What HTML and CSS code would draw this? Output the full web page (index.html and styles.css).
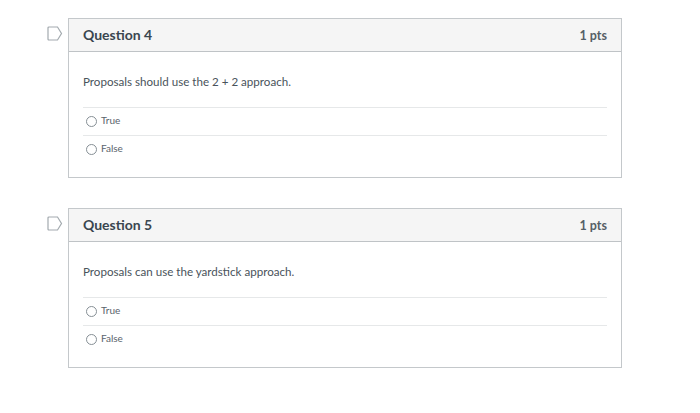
FILE: index.html
```html
<!DOCTYPE html>
<html lang="en">
<head>
    <meta charset="UTF-8">
    <title>Quiz</title>
    <link rel="stylesheet" href="styles.css">
</head>
<body>
    <div class="quiz">
        <div class="question-row">
            <svg class="flag" width="16" height="15" viewBox="0 0 16 15">
                <path d="M2 1H10.5L14.5 7.5L10.5 14H2Q1 14 1 13V2Q1 1 2 1Z" fill="none" stroke="#a3aaaf" stroke-width="1.2"/>
            </svg>
            <div class="question">
                <div class="question-header">
                    <span class="question-name">Question 4</span>
                    <span class="question-pts">1 pts</span>
                </div>
                <div class="question-body">
                    <p class="question-text">Proposals should use the 2 + 2 approach.</p>
                    <div class="answer"><span class="radio"></span>True</div>
                    <div class="answer"><span class="radio"></span>False</div>
                </div>
            </div>
        </div>
        <div class="question-row">
            <svg class="flag" width="16" height="15" viewBox="0 0 16 15">
                <path d="M2 1H10.5L14.5 7.5L10.5 14H2Q1 14 1 13V2Q1 1 2 1Z" fill="none" stroke="#a3aaaf" stroke-width="1.2"/>
            </svg>
            <div class="question">
                <div class="question-header">
                    <span class="question-name">Question 5</span>
                    <span class="question-pts">1 pts</span>
                </div>
                <div class="question-body">
                    <p class="question-text">Proposals can use the yardstick approach.</p>
                    <div class="answer"><span class="radio"></span>True</div>
                    <div class="answer"><span class="radio"></span>False</div>
                </div>
            </div>
        </div>
    </div>
</body>
</html>
```

FILE: styles.css
```css
body {
    margin: 0;
    background-color: #ffffff;
    font-family: Lato, "Open Sans", sans-serif;
    color: #2d3b45;
}
.quiz {
    display: flex;
    flex-direction: column;
    gap: 30px;
    padding: 18px 78px 0 47px;
}
.question-row {
    display: flex;
    align-items: flex-start;
    gap: 5px;
}
.flag {
    margin-top: 8px;
    flex-shrink: 0;
}
.question {
    flex: 1;
    height: 160px;
    box-sizing: border-box;
    border: 1px solid #c4c8cb;
}
.question-header {
    display: flex;
    justify-content: space-between;
    align-items: center;
    height: 33px;
    box-sizing: border-box;
    padding: 0 14px 1px;
    background-color: #f5f5f5;
    border-bottom: 1px solid #bfc3c6;
}
.question-name {
    font-size: 14px;
    font-weight: 700;
    color: #3a464f;
}
.question-pts {
    margin-top: 1px;
    font-size: 12.5px;
    font-weight: 700;
    color: #555f67;
}
.question-body {
    padding: 0 14px;
}
.question-text {
    margin: 0;
    padding: 21px 0 17px;
    font-size: 11.6px;
    line-height: 17px;
    color: #49535b;
}
.answer {
    display: flex;
    align-items: center;
    height: 23px;
    padding-bottom: 4px;
    border-top: 1px solid #e6e8e9;
    font-size: 10px;
    color: #5a646c;
}
.radio {
    width: 9px;
    height: 9px;
    margin: 3px 4px 0 3px;
    border: 1px solid #868f95;
    border-radius: 50%;
}
```
